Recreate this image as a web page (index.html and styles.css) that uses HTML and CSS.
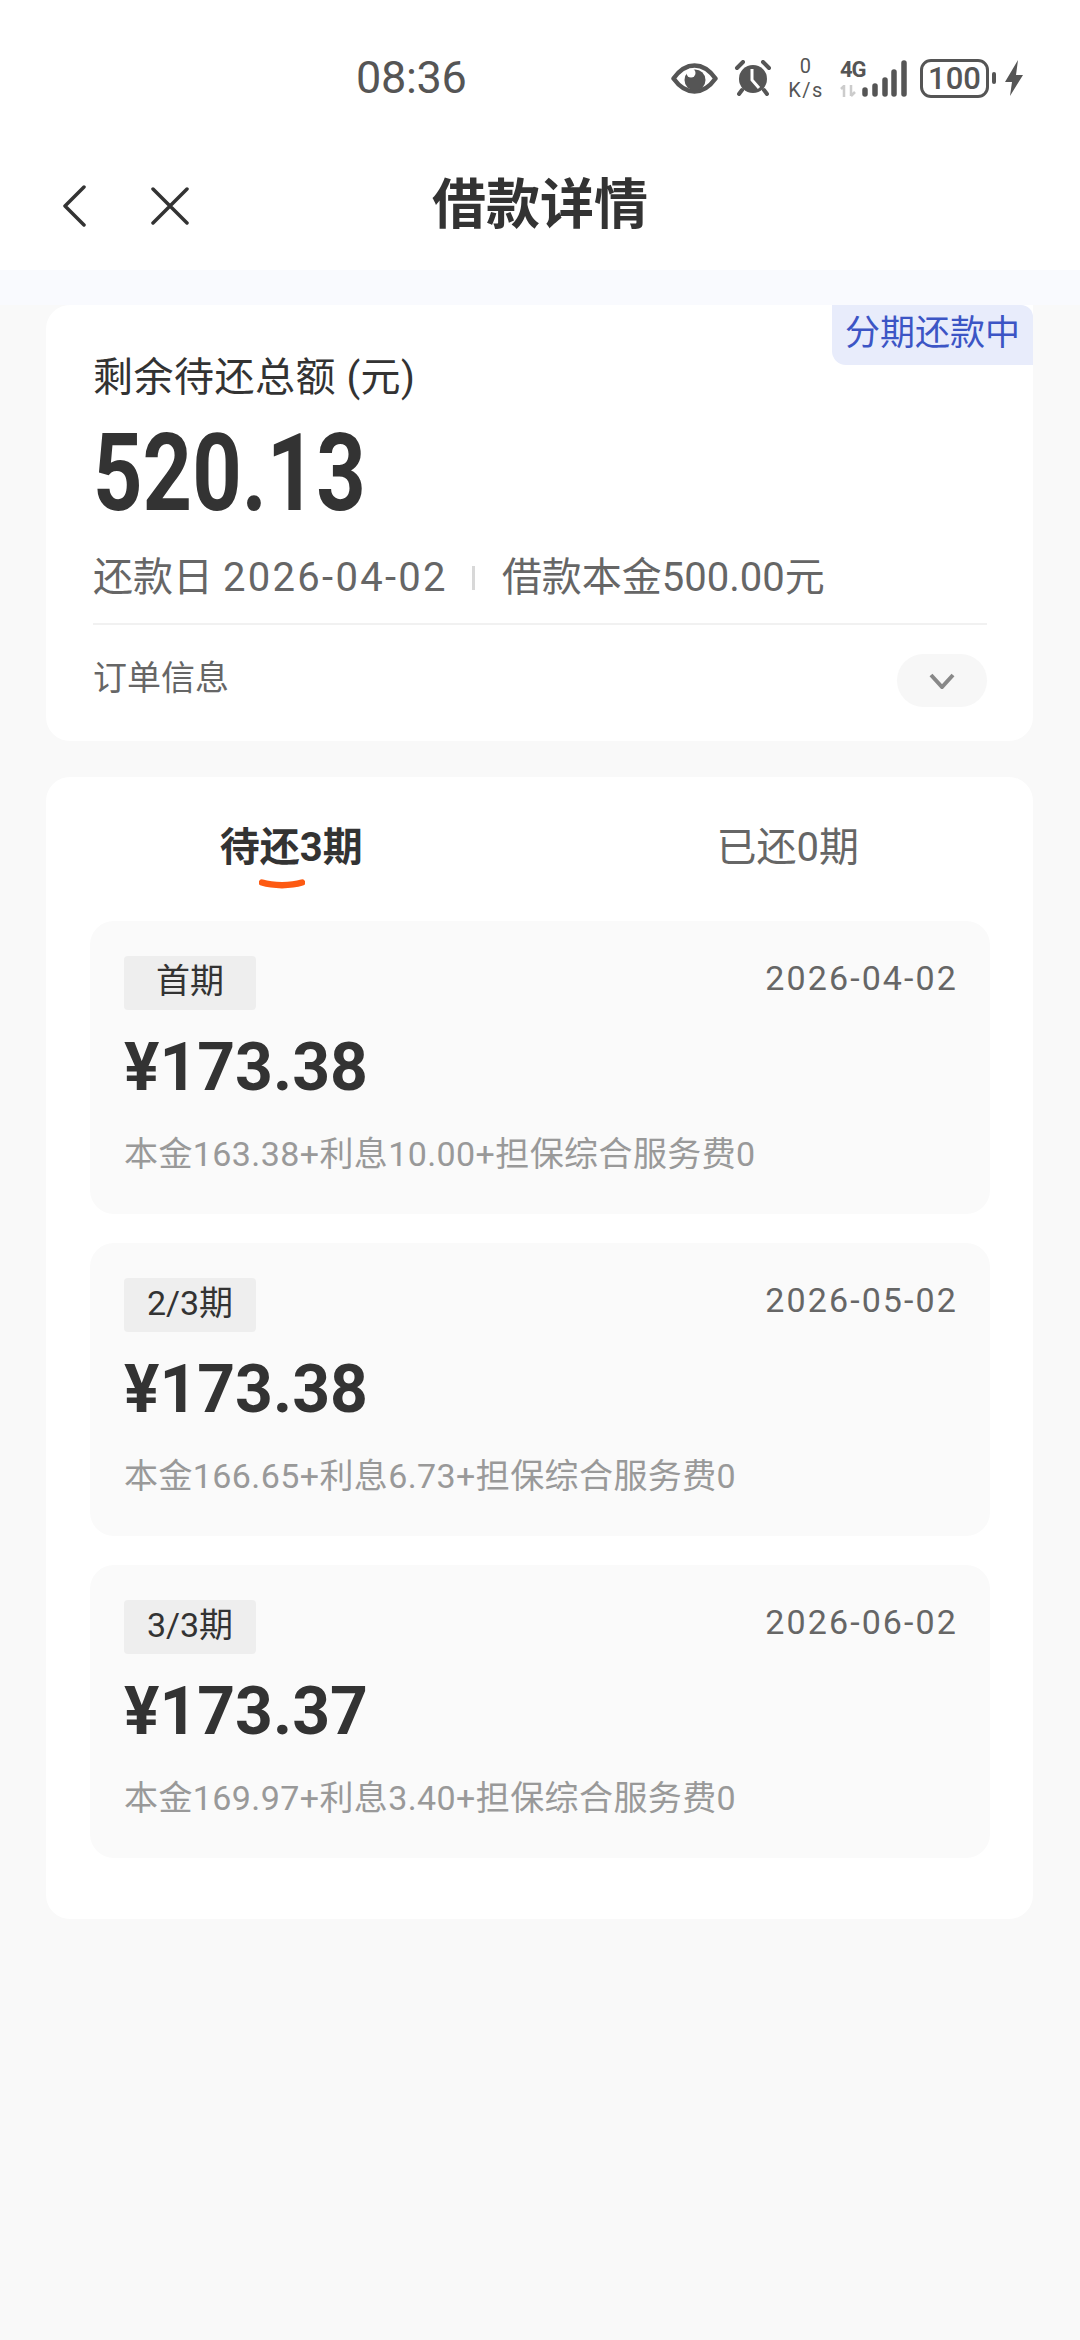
FILE: index.html
```html
<!DOCTYPE html>
<html lang="zh-CN">
<head>
    <meta charset="UTF-8">
    <meta name="viewport" content="width=device-width, initial-scale=1.0">
    <title>借款详情</title>
    <link rel="stylesheet" href="styles.css">
</head>
<body>
    <!-- Status bar -->
    <div class="status-bar">
        <span class="time">08:36</span>
        <div class="status-icons">
            <svg class="eye-icon" width="47" height="31" viewBox="0 0 47 31">
                <path d="M2.5 15.5C10 5 17 2.5 23.5 2.5S37 5 44.500 15.500C37 26 30 28.500 23.500 28.500S10 26 2.500 15.500Z" fill="none" stroke="#555" stroke-width="4.500" stroke-linejoin="round"/>
                <circle cx="24" cy="17" r="10.500" fill="#555"/>
                <circle cx="20" cy="10" r="4.500" fill="#fff"/>
            </svg>
            <svg class="alarm-icon" width="38" height="36" viewBox="0 0 38 36">
                <circle cx="19" cy="19" r="14" fill="#555"/>
                <path d="M18 9V20L25 28" fill="none" stroke="#fff" stroke-width="3"/>
                <path d="M3 8L9 2M29 2L35 8M8 30L5 34M30 30L33 34" fill="none" stroke="#555" stroke-width="4" stroke-linecap="round"/>
            </svg>
            <div class="speed">
                <span>0</span>
                <span>K/s</span>
            </div>
            <div class="network">
                <div class="network-type">
                    <span class="four-g">4G</span>
                    <svg width="16" height="12" viewBox="0 0 16 12">
                        <path d="M4 12V1M1 4L4 1L4 5M11 0V11M11 11L15 7" fill="none" stroke="#ccc" stroke-width="2.500"/>
                    </svg>
                </div>
                <svg width="46" height="37" viewBox="0 0 46 37">
                    <path d="M3 30V34M13 26V34M23 20V34M32 12V34M42 3V34" fill="none" stroke="#555" stroke-width="5.500" stroke-linecap="round"/>
                </svg>
            </div>
            <div class="battery">
                <span class="battery-body">100</span>
                <span class="battery-tip"></span>
            </div>
            <svg class="bolt-icon" width="18" height="36" viewBox="0 0 18 36">
                <polygon points="13,0 0,22 7,22 5,36 18,15 11,15" fill="#555"/>
            </svg>
        </div>
    </div>

    <!-- Nav bar -->
    <div class="nav-bar">
        <div class="nav-buttons">
            <svg width="24" height="42" viewBox="0 0 24 42">
                <path d="M22 2L3 21L22 40" fill="none" stroke="#333" stroke-width="3.500" stroke-linecap="round" stroke-linejoin="round"/>
            </svg>
            <svg width="38" height="38" viewBox="0 0 38 38">
                <path d="M2 2L36 36M36 2L2 36" fill="none" stroke="#333" stroke-width="3.500" stroke-linecap="round"/>
            </svg>
        </div>
        <h1 class="nav-title">借款详情</h1>
    </div>
    <div class="band"></div>

    <!-- Summary card -->
    <div class="card summary-card">
        <span class="state-badge">分期还款中</span>
        <div class="summary-label">剩余待还总额 (元)</div>
        <div class="summary-amount">520.13</div>
        <div class="summary-meta">
            <span class="meta-date">还款日 <span class="meta-digits">2026-04-02</span></span>
            <span class="meta-sep"></span>
            <span>借款本金500.00元</span>
        </div>
        <div class="order-row">
            <span class="order-label">订单信息</span>
            <span class="order-toggle">
                <svg width="26" height="16" viewBox="0 0 26 16">
                    <path d="M2 2L13 14L24 2" fill="none" stroke="#888" stroke-width="4"/>
                </svg>
            </span>
        </div>
    </div>

    <!-- Repayment plan -->
    <div class="card plan-card">
        <div class="tabs">
            <div class="tab tab-active">
                <span>待还3期</span>
                <svg class="tab-mark" width="46" height="13" viewBox="0 0 46 13">
                    <path d="M3 3.500C14 7 32 7 43 3.500" fill="none" stroke="#fd5a12" stroke-width="6.500" stroke-linecap="round"/>
                </svg>
            </div>
            <div class="tab">
                <span>已还0期</span>
            </div>
        </div>

        <div class="plan-item">
            <div class="plan-head">
                <span class="plan-tag">首期</span>
                <span class="plan-date">2026-04-02</span>
            </div>
            <div class="plan-amount">¥173.38</div>
            <div class="plan-detail">本金163.38+利息10.00+担保综合服务费0</div>
        </div>
        <div class="plan-item">
            <div class="plan-head">
                <span class="plan-tag">2/3期</span>
                <span class="plan-date">2026-05-02</span>
            </div>
            <div class="plan-amount">¥173.38</div>
            <div class="plan-detail">本金166.65+利息6.73+担保综合服务费0</div>
        </div>
        <div class="plan-item">
            <div class="plan-head">
                <span class="plan-tag">3/3期</span>
                <span class="plan-date">2026-06-02</span>
            </div>
            <div class="plan-amount">¥173.37</div>
            <div class="plan-detail">本金169.97+利息3.40+担保综合服务费0</div>
        </div>
    </div>
</body>
</html>
```

FILE: styles.css
```css
body {
    margin: 0;
    height: 2340px;
    overflow: hidden;
    background-color: #f9f9f9;
    color: #333;
    font-family: Roboto, "Noto Sans CJK SC", sans-serif;
}

/* Status bar */
.status-bar {
    height: 115px;
    box-sizing: border-box;
    padding: 41px 57px 0 356px;
    display: flex;
    justify-content: space-between;
    align-items: center;
    background-color: #fff;
    color: #555;
}
.time {
    font-size: 45px;
    line-height: 50px;
    letter-spacing: -0.300px;
}
.status-icons {
    display: flex;
    align-items: center;
    gap: 16px;
}
.speed {
    width: 36px;
    display: flex;
    flex-direction: column;
    align-items: center;
    font-size: 20px;
    line-height: 24px;
    letter-spacing: 1.500px;
}
.network {
    display: flex;
    align-items: center;
    margin-right: -4px;
}
.network-type {
    width: 22px;
    display: flex;
    flex-direction: column;
    gap: 5px;
}
.four-g {
    font-size: 22px;
    line-height: 20px;
    font-weight: 700;
    letter-spacing: -1px;
}
.battery {
    display: flex;
    align-items: center;
    gap: 3px;
}
.battery-body {
    width: 69px;
    height: 39px;
    box-sizing: border-box;
    border: 3px solid #555;
    border-radius: 11px;
    text-align: center;
    font-size: 31px;
    line-height: 33px;
    font-weight: 500;
}
.battery-tip {
    width: 4px;
    height: 12px;
    border-radius: 2px;
    background-color: #555;
}
.bolt-icon {
    margin-left: -7px;
}

/* Nav bar */
.nav-bar {
    height: 155px;
    box-sizing: border-box;
    padding-top: 26px;
    display: grid;
    grid-template-columns: 1fr auto 1fr;
    align-items: center;
    background-color: #fff;
}
.nav-buttons {
    padding-left: 62px;
    display: flex;
    align-items: center;
    gap: 65px;
}
.nav-title {
    margin: 0;
    font-size: 54px;
    line-height: 70px;
    font-weight: 700;
}
.band {
    height: 35px;
    background-color: #f9fafe;
}

/* Cards */
.card {
    position: relative;
    width: 987px;
    margin-left: 46px;
    box-sizing: border-box;
    background-color: #fff;
    border-radius: 24px;
}
.summary-card {
    height: 436px;
    padding: 48px 46px 0 47px;
    border-top-right-radius: 0;
}
.state-badge {
    position: absolute;
    top: 0;
    right: 0;
    width: 201px;
    height: 60px;
    background-color: #e8ecfb;
    border-radius: 0 12px 0 14px;
    text-align: center;
    color: #3c55c5;
    font-size: 35px;
    line-height: 58px;
}
.summary-label {
    font-size: 40px;
    line-height: 50px;
    letter-spacing: 0.500px;
}
.summary-amount {
    margin-top: 20px;
    font-size: 108px;
    line-height: 100px;
    font-weight: 700;
    transform: scaleX(0.8);
    transform-origin: left center;
}
.summary-meta {
    margin-top: 30px;
    display: flex;
    align-items: center;
    color: #666;
    font-size: 40px;
    line-height: 50px;
    padding-bottom: 20px;
    border-bottom: 2px solid #f1f1f1;
}
.meta-digits {
    letter-spacing: 2.300px;
}
.meta-sep {
    width: 3px;
    height: 24px;
    margin: 0 27px 0 24px;
    background-color: #d8d8d8;
}
.order-row {
    margin-top: 29px;
    display: flex;
    justify-content: space-between;
    align-items: center;
}
.order-label {
    color: #666;
    font-size: 34px;
    line-height: 46px;
    margin-bottom: 6px;
}
.order-toggle {
    width: 90px;
    height: 53px;
    border-radius: 27px;
    background-color: #f7f7f7;
    display: flex;
    justify-content: center;
    align-items: center;
}

/* Repayment plan */
.plan-card {
    margin-top: 36px;
    height: 1142px;
    padding-top: 46px;
}
.tabs {
    display: grid;
    grid-template-columns: 1fr 1fr;
    column-gap: 6px;
}
.tab {
    display: flex;
    flex-direction: column;
    align-items: center;
    color: #666;
    font-size: 40px;
    line-height: 50px;
}
.tab-active {
    color: #333;
    font-weight: 700;
}
.tab-mark {
    margin: 6px 18px 0 0;
}
.plan-item {
    width: 900px;
    height: 293px;
    margin: 29px 0 0 44px;
    box-sizing: border-box;
    padding: 35px 32px 0 34px;
    background-color: #fafafa;
    border-radius: 24px;
}
.plan-head {
    display: flex;
    justify-content: space-between;
    align-items: flex-start;
}
.plan-tag {
    width: 132px;
    height: 54px;
    background-color: #eee;
    border-radius: 4px;
    text-align: center;
    font-size: 34px;
    line-height: 50px;
}
.plan-date {
    color: #666;
    font-size: 34px;
    line-height: 44px;
    letter-spacing: 2.100px;
}
.plan-amount {
    margin-top: 18px;
    font-size: 66px;
    line-height: 80px;
    font-weight: 700;
}
.plan-detail {
    margin-top: 21px;
    color: #999;
    font-size: 34px;
    line-height: 50px;
    letter-spacing: 0.400px;
}
```
